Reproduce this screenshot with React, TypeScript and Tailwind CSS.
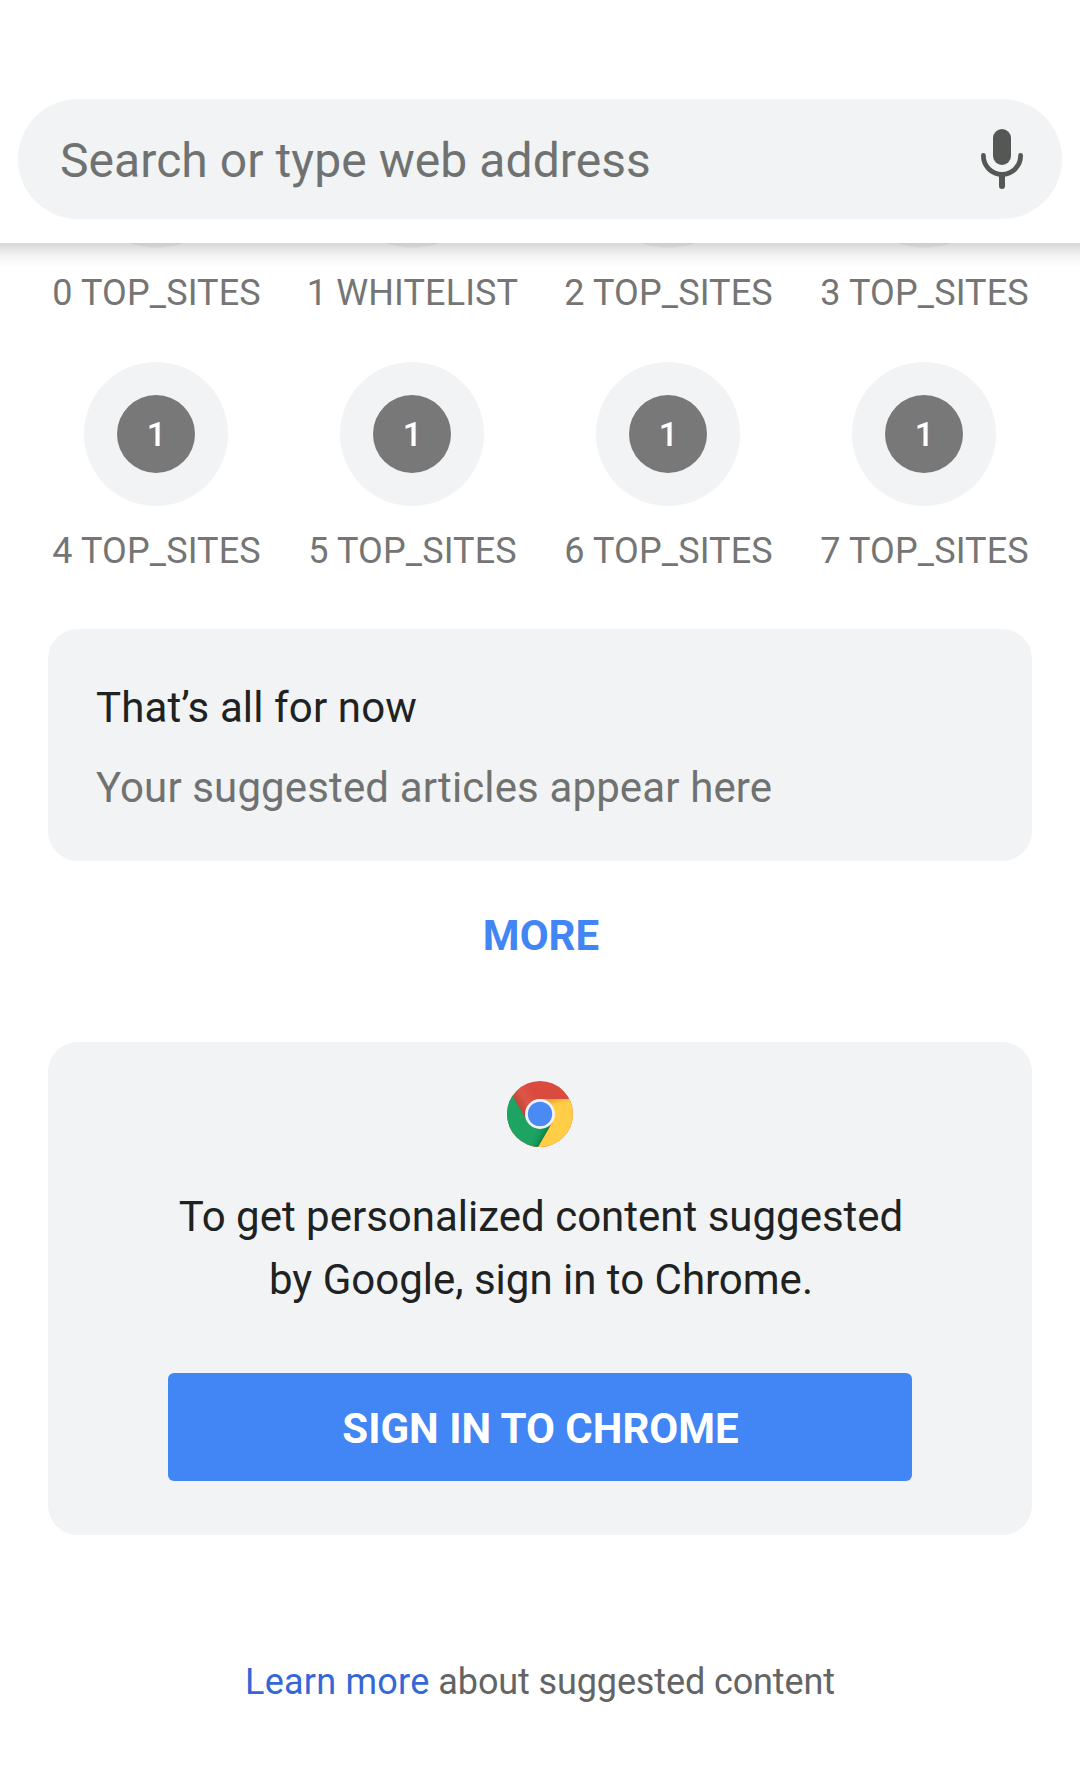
const rows = [
  ["0 TOP_SITES", "1 WHITELIST", "2 TOP_SITES", "3 TOP_SITES"],
  ["4 TOP_SITES", "5 TOP_SITES", "6 TOP_SITES", "7 TOP_SITES"],
];

function MicIcon() {
  return (
    <svg width="42" height="60" viewBox="0 0 42 60" className="shrink-0">
      <rect x="12" y="0" width="18" height="36" rx="9" fill="#555755" />
      <path
        d="M2.4 26.4v.4a18.6 18.6 0 0 0 37.2 0v-.4"
        fill="none"
        stroke="#555755"
        strokeWidth="4.8"
        strokeLinecap="round"
      />
      <path d="M21 47v10" stroke="#555755" strokeWidth="6" strokeLinecap="round" />
    </svg>
  );
}

function ChromeLogo() {
  return (
    <svg width="66" height="66" viewBox="0 0 66 66" className="shrink-0">
      <defs>
        <clipPath id="disc">
          <circle cx="33" cy="33" r="33" />
        </clipPath>
        <linearGradient id="red" gradientUnits="userSpaceOnUse" x1="8" y1="26" x2="28" y2="14">
          <stop offset="0" stopColor="#b8402f" />
          <stop offset="0.55" stopColor="#de5549" />
          <stop offset="1" stopColor="#db4a3f" />
        </linearGradient>
        <linearGradient id="green" gradientUnits="userSpaceOnUse" x1="37" y1="57" x2="27" y2="52">
          <stop offset="0" stopColor="#108044" />
          <stop offset="0.6" stopColor="#16a05d" />
          <stop offset="1" stopColor="#1da362" />
        </linearGradient>
        <linearGradient id="yellow" gradientUnits="userSpaceOnUse" x1="44" y1="18" x2="47" y2="28">
          <stop offset="0" stopColor="#dfa331" />
          <stop offset="0.6" stopColor="#fdc943" />
          <stop offset="1" stopColor="#ffcd46" />
        </linearGradient>
      </defs>
      <g clipPath="url(#disc)">
        <rect width="66" height="66" fill="url(#red)" />
        <path d="M33 18H66V66H31L46 40Z" fill="url(#yellow)" />
        <path d="M5.5 14.5L19.5 39L33 47L43.5 44.5L31 66H0V14.5Z" fill="url(#green)" />
      </g>
      <circle cx="33" cy="33" r="15" fill="#f2f2f2" />
      <circle cx="33" cy="33" r="12.2" fill="#4a8af4" />
    </svg>
  );
}

function Tile({ label, scrolled }: { label: string; scrolled: boolean }) {
  return (
    <div className="flex w-64 flex-col items-center">
      {scrolled ? (
        // Only the lower edge of the circle shows below the toolbar.
        <div className="flex h-[5px] items-end overflow-hidden">
          <div className="size-36 shrink-0 rounded-full bg-[#f1f3f4]" />
        </div>
      ) : (
        <div className="flex size-36 items-center justify-center rounded-full bg-[#f1f3f4]">
          <div className="flex size-[78px] items-center justify-center rounded-full bg-[#787878] pl-px text-[34px] leading-[40px] font-medium text-white">
            1
          </div>
        </div>
      )}
      <div className="mt-6 pl-px text-[36px] leading-[42px] tracking-[0.12px] whitespace-nowrap text-[#757575]">
        {label}
      </div>
    </div>
  );
}

export default function App() {
  return (
    <div className="flex h-[1776px] w-[1080px] flex-col overflow-hidden bg-white font-['Roboto',sans-serif]">
      <header className="h-[243px] shrink-0 bg-white px-[18px] pt-[99px]">
        <div className="flex h-[120px] items-center justify-between rounded-full bg-[#f1f3f4] pr-[39px] pl-[42px]">
          <span className="pt-[4px] text-[48px] leading-[56px] tracking-[0.07px] text-[#707271]">
            Search or type web address
          </span>
          <MicIcon />
        </div>
      </header>

      <div className="relative flex min-h-0 grow flex-col">
        <div className="absolute inset-x-0 top-0 h-6 bg-gradient-to-b from-black/16 via-black/5 to-transparent" />
        <div className="flex h-[386px] shrink-0 flex-col gap-12 px-7">
          {rows.map((row, index) => (
            <div key={row[0]} className="flex">
              {row.map((label) => (
                <Tile key={label} label={label} scrolled={index === 0} />
              ))}
            </div>
          ))}
        </div>

        <main className="flex shrink-0 flex-col px-12">
          <section className="h-[232px] rounded-[30px] bg-[#f1f3f4] px-12 pt-[54px] text-[42px] leading-[50px] tracking-[0.13px]">
            <h2 className="text-[#202221]">That’s all for now</h2>
            <p className="mt-[30px] text-[#707271]">Your suggested articles appear here</p>
          </section>
          <button className="mt-[50px] self-center pl-[2px] text-[42px] leading-[50px] font-bold text-[#4285f4]">
            MORE
          </button>
          <section className="mt-[81px] flex h-[493px] flex-col items-center rounded-[30px] bg-[#f1f3f4] pt-[39px]">
            <ChromeLogo />
            <p className="mt-[38px] pl-[2px] text-center text-[42px] leading-[63px] text-[#202221]">
              To get personalized content suggested
              <br />
              by Google, sign in to Chrome.
            </p>
            <button className="mt-[62px] h-[108px] w-[744px] rounded-md bg-[#4285f4] pt-[3px] pl-px text-[42px] leading-[50px] font-bold text-white">
              SIGN IN TO CHROME
            </button>
          </section>
          <footer className="mt-[126px] text-center text-[36px] leading-[42px] tracking-[-0.12px] text-[#646464]">
            <a className="tracking-[0.23px] text-[#3367d6]">Learn more</a> about suggested content
          </footer>
        </main>
      </div>
    </div>
  );
}
